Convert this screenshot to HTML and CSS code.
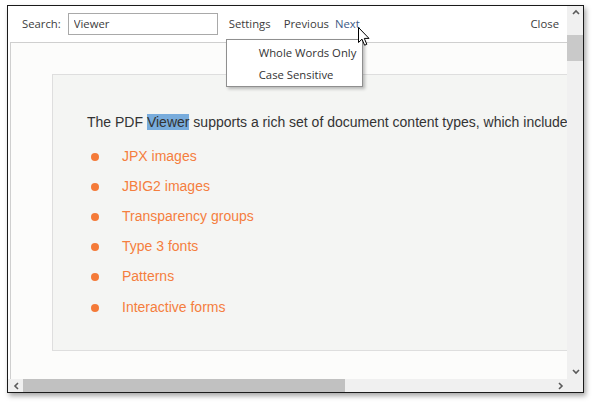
FILE: index.html
```html
<!DOCTYPE html>
<html lang="en">
<head>
<meta charset="utf-8">
<title>PDF Viewer search</title>
<link rel="stylesheet" href="styles.css">
</head>
<body>
<div class="window">
  <div class="main">
    <div class="toolbar">
      <span class="label">Search:</span>
      <input class="search" type="text" value="Viewer">
      <span class="settings">
        <span class="btn">Settings</span>
        <div class="menu">
          <div class="menu-item">Whole Words Only</div>
          <div class="menu-item">Case Sensitive</div>
        </div>
      </span>
      <span class="btn prev">Previous</span>
      <span class="btn next">Next</span>
      <span class="btn close">Close</span>
    </div>
    <div class="viewport">
      <div class="page">
        <p class="para">The PDF <span class="hit">Viewer</span> supports a rich set of document content types, which include</p>
        <ul class="list">
          <li><span class="dot"></span>JPX images</li>
          <li><span class="dot"></span>JBIG2 images</li>
          <li><span class="dot"></span>Transparency groups</li>
          <li><span class="dot"></span>Type 3 fonts</li>
          <li><span class="dot"></span>Patterns</li>
          <li><span class="dot"></span>Interactive forms</li>
        </ul>
      </div>
    </div>
    <div class="hscroll">
      <span class="sbtn"><svg width="13" height="13" viewBox="0 0 13 13"><polyline points="8,4 5,7 8,10" fill="none" stroke="#5a5a5a" stroke-width="1.6"/></svg></span>
      <span class="hthumb"></span>
      <span class="htrack"></span>
      <span class="sbtn"><svg width="13" height="13" viewBox="0 0 13 13"><polyline points="5,4 8,7 5,10" fill="none" stroke="#5a5a5a" stroke-width="1.6"/></svg></span>
    </div>
  </div>
  <div class="vscroll">
    <span class="vbtn"><svg width="16" height="14" viewBox="0 0 16 14"><polyline points="6,8 9,5 12,8" fill="none" stroke="#5a5a5a" stroke-width="1.6"/></svg></span>
    <span class="vthumb"></span>
    <span class="vtrack"></span>
    <span class="vbtn"><svg width="16" height="14" viewBox="0 0 16 14"><polyline points="6,5 9,8 12,5" fill="none" stroke="#5a5a5a" stroke-width="1.6"/></svg></span>
    <span class="corner"></span>
  </div>
  <svg class="cursor" width="14" height="20" viewBox="0 0 14 20"><path d="M0.5,0.5 L0.5,15.5 L4,12.2 L6.6,18.2 L8.8,17.3 L6.3,11.4 L11,11.4 Z" fill="#fff" stroke="#000" stroke-width="1" stroke-linejoin="miter"/></svg>
</div>
</body>
</html>
```

FILE: styles.css
```css
* { box-sizing: border-box; }
html, body { margin: 0; padding: 0; background: #fff; }
body { width: 597px; height: 409px; overflow: hidden; }

.window {
  position: relative;
  margin: 5px 0 0 7px;
  width: 577px;
  height: 388px;
  border: 1px solid #1a1a1a;
  background: #fff;
  display: flex;
  box-shadow: 2px 3px 5px rgba(0, 0, 0, 0.35);
}

.main {
  flex: 1;
  min-width: 0;
  display: flex;
  flex-direction: column;
}

.toolbar {
  height: 37px;
  margin-left: 2px;
  border-bottom: 1px solid #cfcfcf;
  display: flex;
  align-items: center;
  padding: 0 8px 1px 12px;
  font-family: "Open Sans", "Noto Sans", sans-serif;
  font-size: 11.3px;
  color: #3c3c3c;
}

.label { line-height: 16px; }

.search {
  margin-left: 7px;
  width: 150px;
  height: 22px;
  border: 1px solid #a9a9a9;
  padding: 0 0 1px 5px;
  font: inherit;
  color: #3c3c3c;
  background: #fff;
  outline: none;
}

.btn { line-height: 16px; }
.settings { position: relative; margin-left: 11px; display: flex; }
.prev { margin-left: 13px; }
.next { margin-left: 6px; color: #3d5a86; }
.close { margin-left: auto; }

.menu {
  position: absolute;
  left: -3px;
  top: 23px;
  width: 137px;
  background: #fff;
  border: 1px solid #8f8f8f;
  padding: 2px 0 0;
  box-shadow: 2px 2px 3px rgba(0, 0, 0, 0.25);
  z-index: 2;
}

.menu-item {
  height: 22px;
  line-height: 22px;
  padding-left: 32px;
  white-space: nowrap;
  color: #333;
}

.viewport {
  flex: 1;
  margin-left: 2px;
  border-left: 1px solid #cfcfcf;
  background: #fcfcfb;
  overflow: hidden;
  padding: 31px 0 0 41px;
}

.page {
  width: 700px;
  background: #f4f5f3;
  border: 1px solid #dedede;
  padding: 37px 0 29px 34px;
  font-family: "Liberation Sans", Arial, sans-serif;
  font-size: 14px;
}

.para {
  margin: 0;
  line-height: 20px;
  color: #333;
  white-space: nowrap;
}

.hit { background: #78acdc; }

.list {
  list-style: none;
  margin: 9px 0 0;
  padding: 0;
}

.list li {
  height: 30px;
  display: flex;
  align-items: center;
  padding-left: 4px;
  color: #f47e3e;
}

.list li:last-child { margin-top: 1px; height: 29px; }

.dot {
  width: 8px;
  height: 8px;
  border-radius: 50%;
  background: #f47a38;
  margin-right: 23px;
  margin-top: 2px;
}

.hscroll {
  height: 13px;
  display: flex;
  background: #f0f0f0;
}

.sbtn { width: 13px; height: 13px; display: flex; }
.sbtn:first-child { margin-left: 2px; }
.hthumb { width: 322px; background: #c1c1c1; }
.htrack { flex: 1; }

.vscroll {
  width: 16px;
  display: flex;
  flex-direction: column;
  background: #f0f0f0;
}

.vbtn { height: 14px; display: flex; }
.vbtn:first-child { height: 29px; align-items: flex-start; }
.vthumb { height: 26px; background: #c9c9c9; }
.vtrack { flex: 1; }
.corner { height: 13px; }

.cursor {
  position: absolute;
  left: 350px;
  top: 21px;
  z-index: 3;
}
```
